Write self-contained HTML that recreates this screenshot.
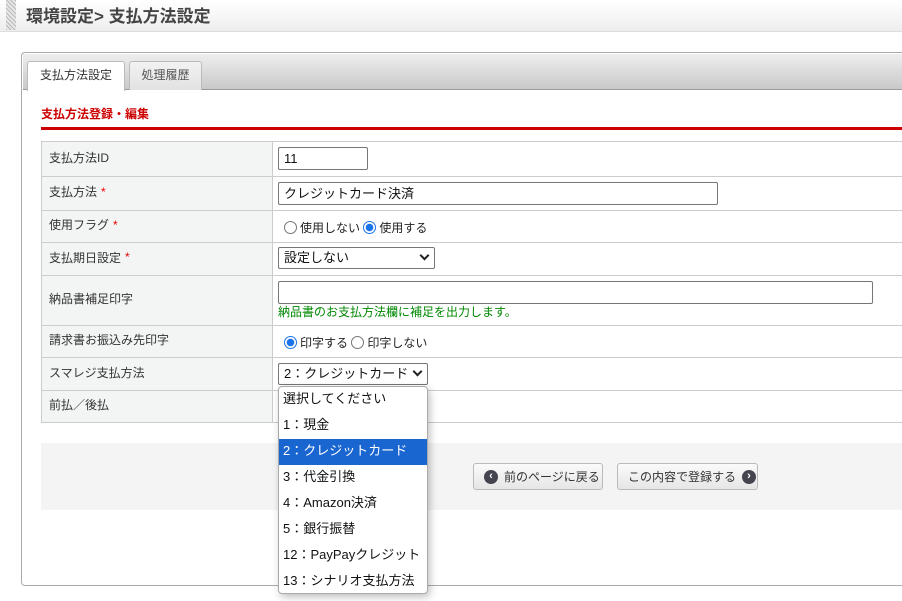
<!DOCTYPE html>
<html><head><meta charset="utf-8"><style>
*{box-sizing:border-box;margin:0;padding:0}
body{width:902px;height:601px;overflow:hidden;background:#fff;font-family:"Liberation Sans","Noto Sans CJK JP",sans-serif;font-size:12px;color:#333;position:relative}
.a{position:absolute}
.hdr{left:0;top:0;width:902px;height:32px;background:linear-gradient(#fff,#eee);border-bottom:1px solid #ddd}
.hatch{left:6px;top:0;width:10px;height:30px;background:repeating-linear-gradient(45deg,#bbb 0 1px,#e6e6e6 1px 3px)}
.title{left:26px;top:2px;font-size:17px;font-weight:bold;color:#444}
.panel{left:21px;top:52px;width:900px;height:534px;border:1px solid #aaa;border-radius:4px;border-right:none}
.tabbar{left:23px;top:54px;width:879px;height:36px;background:linear-gradient(#eee,#c9c9c9);border-bottom:1px solid #999}
.tab{top:61px;height:29px;border:1px solid #bbb;border-bottom:none;border-radius:3px 3px 0 0;font-size:12px;text-align:center;line-height:26px}
.sec{left:41px;top:105px;color:#c00;font-weight:bold;font-size:12px}
.red{left:41px;top:127px;width:861px;height:3px;background:#c00}
.row{left:41px;width:861px;border-top:1px solid #ccc;}
.lab{position:absolute;left:0;top:0;bottom:0;width:232px;background:#f3f4f4;border-left:1px solid #ccc;border-right:1px solid #ccc;padding-left:7px;padding-bottom:4px;display:flex;align-items:center}
.st{color:#e00;margin-left:4px}
.in{position:absolute;border:1px solid #767676;border-radius:2px;background:#fff;padding-left:5px;font-size:13px;color:#111}
.rad{display:inline-block;width:13px;height:13px;border:1px solid #767676;border-radius:50%;vertical-align:-2px;margin-right:3px;background:#fff}
.rad.on{border:1px solid #1a73e8;background:radial-gradient(circle,#1a73e8 0 3.5px,#fff 4px)}
.radio{position:absolute;font-size:12px;color:#222}
.chev{position:absolute;right:6px;top:50%;margin-top:-6px;width:7px;height:7px;border-right:2px solid #222;border-bottom:2px solid #222;transform:rotate(45deg)}
.btnarea{left:41px;top:443px;width:861px;height:67px;background:#f4f4f4}
.btn{top:463px;height:27px;border:1px solid #bbb;border-radius:3px;background:linear-gradient(#fafafa,#e6e6e6);font-size:12px;color:#333;display:flex;align-items:center;gap:6px}
.ic{display:inline-flex;align-items:center;justify-content:center;width:14px;height:14px;border-radius:50%;background:#454550;color:#fff;font-size:11px;font-weight:bold;line-height:1}
.dd{left:278px;top:386px;width:150px;height:208px;background:#fff;border:1px solid #aaa;border-radius:4px;box-shadow:2px 3px 8px rgba(0,0,0,.25);overflow:hidden}
.dd div{height:26px;line-height:24px;padding-left:4px;font-size:13px;color:#111}
.dd .sel{background:#1a66d1;color:#fff}
</style></head><body>
<div class="a hdr"></div><div class="a hatch"></div>
<div class="a title">環境設定&gt; 支払方法設定</div>
<div class="a panel"></div>
<div class="a tabbar"></div>
<div class="a tab" style="left:27px;width:98px;background:#fff;height:30px">支払方法設定</div>
<div class="a tab" style="left:129px;width:73px;background:linear-gradient(#f2f2f2,#e2e2e2);color:#555">処理履歴</div>
<div class="a sec">支払方法登録・編集</div>
<div class="a red"></div>

<div class="a row" style="top:141px;height:35px"><div class="lab">支払方法ID</div><div class="in" style="left:237px;top:5px;width:90px;height:23px;line-height:21px">11</div></div>
<div class="a row" style="top:176px;height:34px"><div class="lab">支払方法<span class="st">*</span></div><div class="in" style="left:237px;top:5px;width:440px;height:23px;line-height:21px">クレジットカード決済</div></div>
<div class="a row" style="top:210px;height:32px"><div class="lab">使用フラグ<span class="st">*</span></div><div class="radio" style="left:243px;top:8px"><span class="rad"></span>使用しない <span class="rad on"></span>使用する</div></div>
<div class="a row" style="top:242px;height:33px"><div class="lab">支払期日設定<span class="st">*</span></div><div class="in" style="left:237px;top:4px;width:157px;height:22px;line-height:20px">設定しない<span class="chev"></span></div></div>
<div class="a row" style="top:275px;height:50px"><div class="lab">納品書補足印字</div><div class="in" style="left:237px;top:5px;width:595px;height:23px"></div><div class="a" style="left:237px;top:27px;color:#080;font-size:12px">納品書のお支払方法欄に補足を出力します。</div></div>
<div class="a row" style="top:325px;height:32px"><div class="lab">請求書お振込み先印字</div><div class="radio" style="left:243px;top:8px"><span class="rad on"></span>印字する <span class="rad"></span>印字しない</div></div>
<div class="a row" style="top:357px;height:33px"><div class="lab">スマレジ支払方法</div><div class="in" style="left:237px;top:5px;width:150px;height:22px;line-height:20px">2：クレジットカード<span class="chev"></span></div></div>
<div class="a row" style="top:390px;height:33px;border-bottom:1px solid #ccc"><div class="lab">前払／後払</div></div>

<div class="a btnarea"></div>
<div class="a btn" style="left:473px;width:130px;padding-left:10px"><span class="ic">‹</span>前のページに戻る</div>
<div class="a btn" style="left:617px;width:141px;padding-left:10px">この内容で登録する<span class="ic">›</span></div>

<div class="a dd">
<div>選択してください</div><div>1：現金</div><div class="sel">2：クレジットカード</div><div>3：代金引換</div><div>4：Amazon決済</div><div>5：銀行振替</div><div>12：PayPayクレジット</div><div>13：シナリオ支払方法</div>
</div>
</body></html>
